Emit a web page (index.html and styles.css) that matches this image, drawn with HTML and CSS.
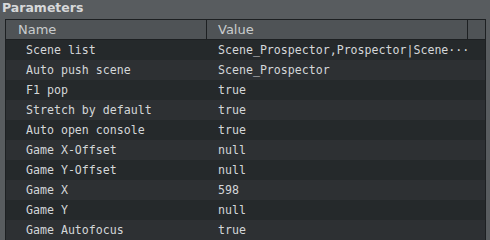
FILE: index.html
```html
<!DOCTYPE html>
<html lang="en">
<head>
    <meta charset="UTF-8">
    <title>Parameters</title>
    <link rel="stylesheet" href="styles.css">
</head>
<body>
    <div class="panel-title">Parameters</div>
    <div class="param-table">
        <div class="param-head">
            <div class="head-cell name">Name</div>
            <div class="head-cell value">Value</div>
            <div class="head-cell spare"></div>
        </div>
        <div class="param-row"><span class="name">Scene list</span><span class="value">Scene_Prospector,Prospector|Scene···</span></div>
        <div class="param-row"><span class="name">Auto push scene</span><span class="value">Scene_Prospector</span></div>
        <div class="param-row"><span class="name">F1 pop</span><span class="value">true</span></div>
        <div class="param-row"><span class="name">Stretch by default</span><span class="value">true</span></div>
        <div class="param-row"><span class="name">Auto open console</span><span class="value">true</span></div>
        <div class="param-row"><span class="name">Game X-Offset</span><span class="value">null</span></div>
        <div class="param-row"><span class="name">Game Y-Offset</span><span class="value">null</span></div>
        <div class="param-row"><span class="name">Game X</span><span class="value">598</span></div>
        <div class="param-row"><span class="name">Game Y</span><span class="value">null</span></div>
        <div class="param-row"><span class="name">Game Autofocus</span><span class="value">true</span></div>
    </div>
</body>
</html>
```

FILE: styles.css
```css
html, body {
    margin: 0;
    height: 240px;
    overflow: hidden;
}
body {
    background: #585c5f;
    color: #d4d7d9;
    font-family: "DejaVu Sans Mono", "Liberation Mono", monospace;
    font-size: 11.6px;
}
.panel-title {
    height: 19px;
    padding-left: 2px;
    font-family: "DejaVu Sans", sans-serif;
    font-weight: bold;
    font-size: 12.5px;
    line-height: 15px;
    color: #d6d8d9;
}
.param-table {
    margin-left: 5px;
    width: 481px;
    box-sizing: border-box;
    border: 1px solid #1d2022;
    border-bottom: none;
}
.param-head {
    display: grid;
    grid-template-columns: 201px 261px 17px;
    height: 20px;
    background: #4f5356;
    border-bottom: 1px solid #1d2022;
    box-sizing: border-box;
}
.head-cell {
    border-right: 1px solid #1d2022;
    font-family: "DejaVu Sans", sans-serif;
    font-size: 13px;
    line-height: 19px;
    color: #c9cccd;
}
.head-cell.name {
    padding-left: 12px;
}
.head-cell.value {
    padding-left: 11px;
}
.head-cell.spare {
    border-right: none;
}
.param-row {
    display: grid;
    grid-template-columns: 201px 1fr;
    height: 20px;
    line-height: 20px;
    background: #25292b;
    white-space: nowrap;
}
.param-row:nth-of-type(odd) {
    background: #2d3033;
}
.param-row .name {
    padding-left: 20px;
}
.param-row .value {
    padding-left: 11px;
}
```
